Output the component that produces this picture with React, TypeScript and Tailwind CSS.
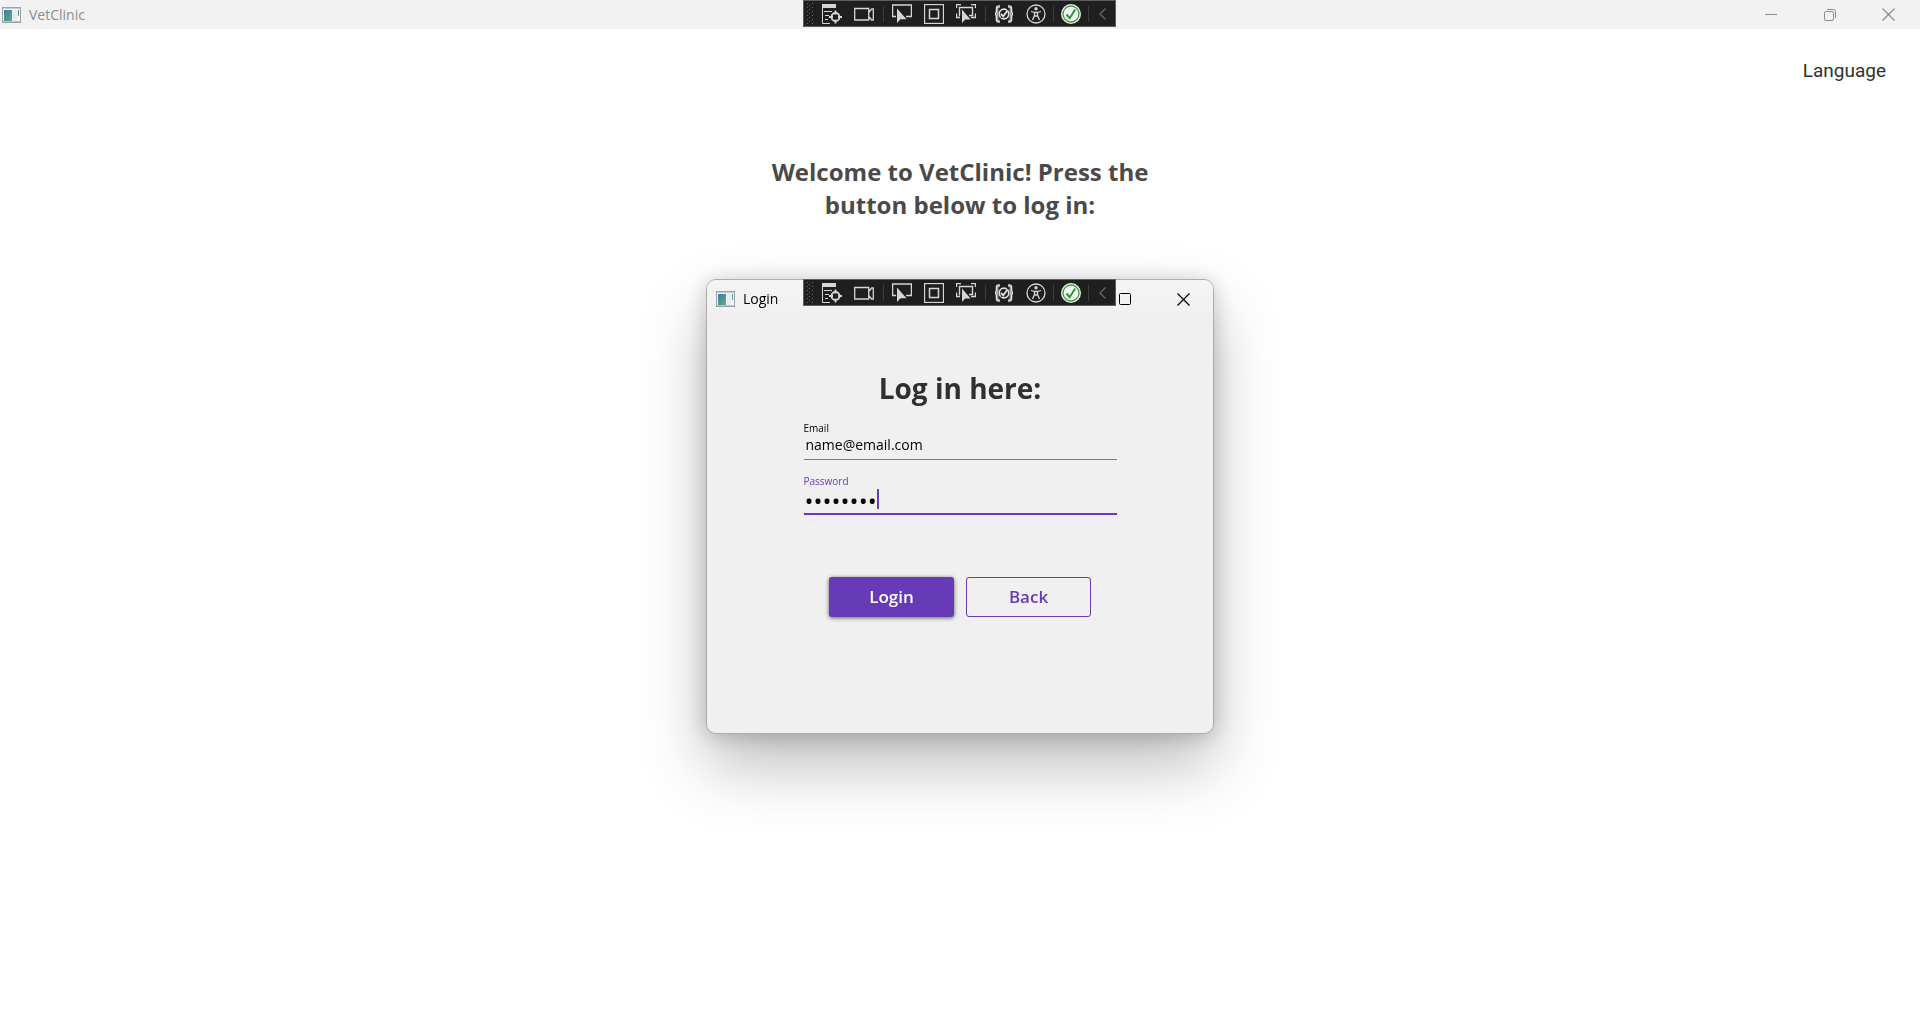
import React, { useState } from "react";

const UI_FONT = "font-['Open_Sans','Noto_Sans',sans-serif]";

function AppIcon() {
  return (
    <svg width="19" height="16" viewBox="0 0 19 16" aria-hidden="true">
      <defs>
        <linearGradient id="appIconFill" x1="0" y1="0" x2="1" y2="1">
          <stop offset="0" stopColor="#4478ae" />
          <stop offset="1" stopColor="#55b27e" />
        </linearGradient>
      </defs>
      <rect x="0.5" y="0.5" width="18" height="15" fill="#f4f6f8" stroke="#9aa3ab" />
      <rect x="1" y="1" width="17" height="1" fill="#c6cdd4" />
      <rect x="2" y="3" width="8" height="11" fill="url(#appIconFill)" />
      <rect x="11" y="3" width="4" height="11" fill="#e9ebed" />
      <rect x="16" y="3" width="1" height="6" fill="#4a9a8c" />
      <rect x="1" y="14" width="17" height="1" fill="#b9c0c8" />
    </svg>
  );
}

function Grip() {
  const rows = [0, 1, 2, 3, 4, 5];
  return (
    <svg width="6" height="22" viewBox="0 0 6 22" aria-hidden="true" fill="#666666" shapeRendering="crispEdges">
      {rows.map((r) => (
        <g key={r}>
          <rect x="0" y={r * 4} width="1" height="1" />
          <rect x="5" y={r * 4} width="1" height="1" />
          {r < 5 && <rect x="2" y={r * 4 + 2} width="1" height="1" />}
        </g>
      ))}
    </svg>
  );
}

function TreeIcon() {
  return (
    <svg width="20" height="20" viewBox="0 0 20 20" aria-hidden="true" fill="none" stroke="#d6d6d6">
      <rect x="0" y="0" width="14" height="4" fill="#d6d6d6" stroke="none" />
      <path d="M.5 4v15.5H8M2 7.500h8M3 11.500h4M3 15.500h3" />
      <circle cx="13.500" cy="13" r="4" strokeWidth="1.800" />
      <path d="M13.500 6.500v4M13.500 15.500v4M7 13h4M16 13h4" strokeWidth="1.800" />
    </svg>
  );
}

function CameraIcon() {
  return (
    <svg width="20" height="20" viewBox="0 0 20 20" aria-hidden="true" fill="none" stroke="#d6d6d6" strokeWidth="1.300">
      <path d="M.7 4.500h14v11.500H.7zM14.700 8.500l3-3.500h1.600v11h-1.600l-3-3.500" />
    </svg>
  );
}

function SelectIcon() {
  return (
    <svg width="20" height="20" viewBox="0 0 20 20" aria-hidden="true">
      <path d="M4 12.500H.5V1H19.500V12.500H14" fill="none" stroke="#d6d6d6" strokeWidth="1.500" />
      <path d="M5 4.500v14.500l3.500-3.800h6z" fill="#d6d6d6" />
    </svg>
  );
}

function AdornerIcon() {
  return (
    <svg width="20" height="20" viewBox="0 0 20 20" aria-hidden="true" fill="none" stroke="#d6d6d6">
      <rect x="0.5" y="0.5" width="19" height="19" strokeWidth="1.300" />
      <rect x="5.500" y="5.500" width="9" height="9" strokeWidth="1.500" />
    </svg>
  );
}

function TrackIcon() {
  return (
    <svg width="20" height="20" viewBox="0 0 20 20" aria-hidden="true">
      <path
        d="M5 .5H.5V4M15 .5h4.500V4M.5 9.500v4H4M19.500 9.500v4H15M4 11.500H3.500V3.500h13v8H13"
        fill="none"
        stroke="#d6d6d6"
        strokeWidth="1.400"
      />
      <path d="M6 5.500v13.500l3.200-3.500h5.300z" fill="#d6d6d6" />
    </svg>
  );
}

function BracesIcon() {
  return (
    <svg width="20" height="20" viewBox="0 0 20 20" aria-hidden="true" fill="none" stroke="#e2e2e2">
      <path
        d="M6 2.500H5Q3 2.500 3 4.500v3Q3 10 1 10Q3 10 3 12.500v3Q3 17.500 5 17.500H6M14 2.500h1Q17 2.500 17 4.500v3Q17 10 19 10Q17 10 17 12.500v3Q17 17.500 15 17.500H14"
        strokeWidth="2.600"
      />
      <path d="M6 2.800H5.300Q3.500 2.800 3.500 5v2.500Q3.500 10 2 10Q3.500 10 3.500 12.500v2.500Q3.500 17.200 5.300 17.200H6M14 2.800h.7Q16.500 2.800 16.500 5v2.500Q16.500 10 18 10Q16.500 10 16.500 12.500v2.500Q16.500 17.200 14.700 17.200H14" stroke="#6a6a6a" strokeWidth="0.600" />
      <circle cx="10" cy="10" r="4.800" strokeWidth="1.700" />
      <path d="M6.500 14.500l8-10" stroke="#1f1f1f" strokeWidth="1" />
      <path d="M7 10l2.300 2.300 4.200-5.800" strokeWidth="1.800" />
    </svg>
  );
}

function AccessibilityIcon() {
  return (
    <svg width="20" height="20" viewBox="0 0 20 20" aria-hidden="true" fill="none" stroke="#d6d6d6">
      <circle cx="10" cy="10" r="9" strokeWidth="1.300" />
      <circle cx="10" cy="4.800" r="1.700" fill="#d6d6d6" stroke="none" />
      <path d="M5 7.500l3.500 1v3L6.500 16M15 7.500l-3.500 1v3l2 4.500M8.500 8.500h3M8.500 12h3" strokeWidth="1.300" />
    </svg>
  );
}

function CheckIcon() {
  return (
    <svg width="20" height="20" viewBox="0 0 20 20" aria-hidden="true">
      <circle cx="10" cy="10" r="10" fill="#e8f0e8" />
      <circle cx="10" cy="10" r="8" fill="#f4f4f4" stroke="#3c9a40" strokeWidth="1.300" />
      <path d="M5.500 10.500l3.200 3.700 5.500-8.700" fill="none" stroke="#2e9432" strokeWidth="2" />
    </svg>
  );
}

function ChevronIcon() {
  return (
    <svg width="8" height="12" viewBox="0 0 8 12" aria-hidden="true">
      <path d="M6.500.5L1 6l5.500 5.500" fill="none" stroke="#686868" strokeWidth="1.300" />
    </svg>
  );
}

function ToolButton({ label, children }: { label: string; children: React.ReactNode }) {
  return (
    <button type="button" aria-label={label} className="flex h-full w-8 items-center justify-center">
      {children}
    </button>
  );
}

function DebugToolbar() {
  return (
    <div className="flex h-[27px] w-[313px] items-center border border-[#5d615d] bg-[#1f1f1f] pl-[3px]">
      <Grip />
      <div className="ml-[3px] flex h-full items-center">
        <ToolButton label="Go to live visual tree"><TreeIcon /></ToolButton>
        <ToolButton label="Record"><CameraIcon /></ToolButton>
      </div>
      <span className="ml-[3px] mr-0.5 h-4 w-px bg-[#3d3d3d]" />
      <ToolButton label="Select element"><SelectIcon /></ToolButton>
      <ToolButton label="Display layout adorners"><AdornerIcon /></ToolButton>
      <ToolButton label="Track focused element"><TrackIcon /></ToolButton>
      <span className="ml-[3px] mr-0.5 h-4 w-px bg-[#3d3d3d]" />
      <ToolButton label="Binding failures"><BracesIcon /></ToolButton>
      <ToolButton label="Scan for accessibility issues"><AccessibilityIcon /></ToolButton>
      <span className="mx-px h-4 w-px bg-[#3d3d3d]" />
      <ToolButton label="Hot reload"><CheckIcon /></ToolButton>
      <span className="mx-px h-4 w-px bg-[#3d3d3d]" />
      <button type="button" aria-label="Collapse toolbar" className="flex h-full flex-1 items-center justify-center">
        <ChevronIcon />
      </button>
    </div>
  );
}

function CaptionButton({ label, children }: { label: string; children: React.ReactNode }) {
  return (
    <button type="button" aria-label={label} className="flex h-full w-[59px] items-center justify-center">
      {children}
    </button>
  );
}

function CloseGlyph() {
  return (
    <svg width="13" height="13" viewBox="0 0 13 13" aria-hidden="true" fill="none" stroke="currentColor" strokeWidth="1.200">
      <path d="M.5.5l12 12M12.500.5l-12 12" />
    </svg>
  );
}

function MainTitleBar() {
  return (
    <header className="relative flex h-[29px] items-center justify-between bg-[#f2f2f2] text-[#8c8c8c]">
      <div className="flex items-center gap-2 pl-0.5">
        <AppIcon />
        <span className="text-sm leading-5">VetClinic</span>
      </div>
      <div className="flex h-full pr-0.5">
        <CaptionButton label="Minimize">
          <svg width="12" height="12" viewBox="0 0 12 12" aria-hidden="true" stroke="currentColor">
            <path d="M0 5.500h12" />
          </svg>
        </CaptionButton>
        <CaptionButton label="Restore">
          <svg width="12" height="12" viewBox="0 0 12 12" aria-hidden="true" fill="none" stroke="currentColor">
            <rect x="0.5" y="2.500" width="9" height="9" rx="1.500" />
            <path d="M3 .5h6.500a2 2 0 0 1 2 2V9" />
          </svg>
        </CaptionButton>
        <CaptionButton label="Close"><CloseGlyph /></CaptionButton>
      </div>
      <div className="absolute inset-x-0 top-0 z-10 flex justify-center pr-px">
        <DebugToolbar />
      </div>
    </header>
  );
}

function LoginDialog() {
  const [email, setEmail] = useState("name@email.com");
  const [password, setPassword] = useState("password");
  return (
    <div
      role="dialog"
      aria-label="Login"
      className="relative w-[508px] rounded-[10px] border border-[#acacac] bg-[#f0f0f0] pb-[116px] shadow-[0_32px_64px_rgba(0,0,0,0.26),0_2px_21px_rgba(0,0,0,0.2)]"
    >
      <div className="flex h-[38px] items-center justify-between rounded-t-[9px] bg-linear-to-b from-[#f4f4f4] to-[#f0f0f0] text-black">
        <div className="flex items-center gap-2 pl-[9px]">
          <AppIcon />
          <span className="text-sm leading-5">Login</span>
        </div>
        <div className="flex h-full">
          <CaptionButton label="Maximize">
            <svg width="12" height="12" viewBox="0 0 12 12" aria-hidden="true" fill="none" stroke="currentColor">
              <rect x="0.5" y="0.5" width="11" height="11" rx="1" />
            </svg>
          </CaptionButton>
          <CaptionButton label="Close"><CloseGlyph /></CaptionButton>
        </div>
      </div>
      <div className="absolute inset-x-0 -top-px flex justify-center pr-px">
        <DebugToolbar />
      </div>

      <form className="mx-auto flex w-[313px] flex-col pt-[50px]" onSubmit={(e) => e.preventDefault()}>
        <h2 className="text-center text-[28px] leading-10 font-bold text-[#303030]">Log in here:</h2>

        <label htmlFor="email" className="mt-3.5 text-[10px] leading-3 text-black">Email</label>
        <input
          id="email"
          type="email"
          value={email}
          onChange={(e) => setEmail(e.target.value)}
          className="h-[26px] w-full border-b border-[#7a7a7a] pb-1 pl-0.5 text-sm leading-5 text-black outline-none"
        />

        <label htmlFor="password" className="mt-[15px] text-[10px] leading-3 text-[#673ab7]">Password</label>
        <div className="relative">
          <input
            id="password"
            type="password"
            value={password}
            onChange={(e) => setPassword(e.target.value)}
            className="block h-7 w-full border-b-2 border-[#673ab7] pl-px text-2xl leading-6 text-black caret-transparent outline-none"
          />
          <span className="absolute top-0.5 left-[73px] h-5 w-0.5 bg-[#673ab7]" />
        </div>

        <div className="mt-[62px] flex justify-center gap-3">
          <button
            type="submit"
            className="h-10 w-[125px] rounded-[3px] bg-[#673ab7] text-[17px] font-semibold text-white shadow-[0_1px_4px_rgba(0,0,0,0.6)]"
          >
            Login
          </button>
          <button
            type="button"
            className="h-10 w-[125px] rounded-[3px] border border-[#673ab7] text-[17px] font-semibold text-[#673ab7]"
          >
            Back
          </button>
        </div>
      </form>
    </div>
  );
}

export default function App() {
  return (
    <div className={`min-h-screen bg-white ${UI_FONT}`}>
      <MainTitleBar />
      <main className="flex flex-col">
        <div className="flex justify-end pt-7 pr-[34px]">
          <button type="button" className="font-[Roboto] text-[19px] leading-7 text-[#303030]">Language</button>
        </div>
        <h1 className="mx-auto mt-[70px] w-[400px] text-center text-2xl leading-[33px] font-bold text-[#4a4a4a]">
          Welcome to VetClinic! Press the button below to log in:
        </h1>
      </main>
      <div className="fixed inset-0 flex items-center justify-center pb-0.5">
        <LoginDialog />
      </div>
    </div>
  );
}
